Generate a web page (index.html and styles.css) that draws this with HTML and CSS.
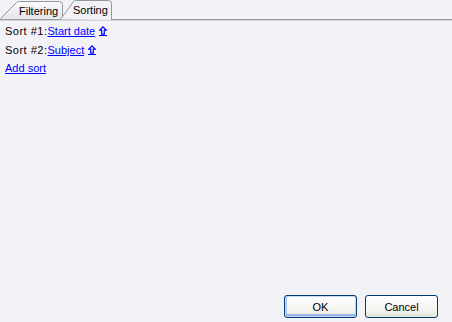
FILE: index.html
```html
<!DOCTYPE html>
<html lang="en">
<head>
  <meta charset="UTF-8">
  <title>Sort options</title>
  <link rel="stylesheet" href="styles.css">
</head>
<body>
  <div class="tab-strip">
    <div class="tab">
      <svg class="tab-shape" width="63" height="18" viewBox="0 0 63 18">
        <defs>
          <linearGradient id="tabOff" x1="0" y1="0" x2="0" y2="1">
            <stop offset="0" stop-color="#fcfcfe"/>
            <stop offset="1" stop-color="#e3e3e9"/>
          </linearGradient>
        </defs>
        <path d="M0.5,17.5 L16.5,1.5 Q17.5,0.5 19.5,0.5 L59.5,0.5 Q62.5,0.5 62.5,3.5 L62.5,17.5" fill="url(#tabOff)" stroke="#919b9c"/>
      </svg>
      <span class="tab-label">Filtering</span>
    </div>
    <div class="tab active">
      <svg class="tab-shape" width="52" height="20" viewBox="0 0 52 20">
        <path d="M0.5,19.5 L13.5,1.5 Q14.5,0.5 16.5,0.5 L48.5,0.5 Q51.5,0.5 51.5,3.5 L51.5,20" fill="#f2f2f7" stroke="#919b9c"/>
      </svg>
      <span class="tab-label">Sorting</span>
    </div>
  </div>

  <div class="content">
    <div class="sort-row">
      <span class="sort-label">Sort #1:</span><a href="#" class="link">Start date</a>
      <a href="#" class="dir"><svg width="8" height="9" viewBox="0 0 8 9"><path d="M4,0.9 L7.3,4.2 L5.3,4.2 L5.3,8.2 L2.7,8.2 L2.7,4.2 L0.7,4.2 Z" fill="none" stroke="#0000ff" stroke-width="1.2"/></svg></a>
    </div>
    <div class="sort-row">
      <span class="sort-label">Sort #2:</span><a href="#" class="link">Subject</a>
      <a href="#" class="dir"><svg width="8" height="9" viewBox="0 0 8 9"><path d="M4,0.9 L7.3,4.2 L5.3,4.2 L5.3,8.2 L2.7,8.2 L2.7,4.2 L0.7,4.2 Z" fill="none" stroke="#0000ff" stroke-width="1.2"/></svg></a>
    </div>
    <div class="sort-row add-row">
      <a href="#" class="link">Add sort</a>
    </div>
  </div>

  <div class="footer">
    <button class="btn default">OK</button>
    <button class="btn">Cancel</button>
  </div>
</body>
</html>
```

FILE: styles.css
```css
/* 整个对话框 */
body {
  margin: 0;
  height: 322px;
  display: flex;
  flex-direction: column;
  background: #f2f2f7;
  font-family: "Liberation Sans", Arial, sans-serif;
  font-size: 11px;
  color: #000;
}

/* 标签页 */
.tab-strip {
  display: flex;
  align-items: flex-end;
  height: 19px;
  border-bottom: 1px solid #919b9c;
  box-shadow: 0 1px 0 #d4d6dc;
}

.tab {
  position: relative;
  height: 18px;
  width: 63px;
  display: flex;
  align-items: center;
}

.tab.active {
  width: 52px;
  height: 20px;
  margin-left: -3px;
  margin-bottom: -1px;
  z-index: 1;
}

.tab-shape {
  position: absolute;
  left: 0;
  top: 0;
}

.tab-label {
  position: relative;
  padding-left: 19px;
  padding-top: 1px;
}

.tab.active .tab-label {
  padding-left: 13px;
  padding-top: 0;
}

/* 排序列表 */
.content {
  flex-grow: 1;
  padding: 2px 5px 0;
}

.sort-row {
  line-height: 19px;
  display: flex;
  align-items: baseline;
}

.add-row {
  margin-top: -1px;
}

.sort-label {
  letter-spacing: 0.5px;
}

.link {
  color: #0000ff;
  text-decoration: underline;
}

.dir {
  margin-left: 4px;
  display: inline-block;
  height: 9px;
  border-bottom: 1px solid #0000ff;
  line-height: 0;
}

/* 底部按钮 */
.footer {
  display: flex;
  justify-content: flex-end;
  gap: 8px;
  padding: 0 14px 4px;
}

.btn {
  width: 73px;
  height: 23px;
  border: 1px solid #003c74;
  border-radius: 3px;
  background: linear-gradient(#ffffff, #f3f3ef 70%, #e3e2dc);
  font-family: "Liberation Sans", Arial, sans-serif;
  font-size: 11px;
  color: #000;
  padding: 0;
}

.btn.default {
  box-shadow: inset 0 0 0 1px #c7d7f7, inset 0 -2px 0 1px #97b3e8, inset 2px 0 0 0 #a9c2ef;
}
```
